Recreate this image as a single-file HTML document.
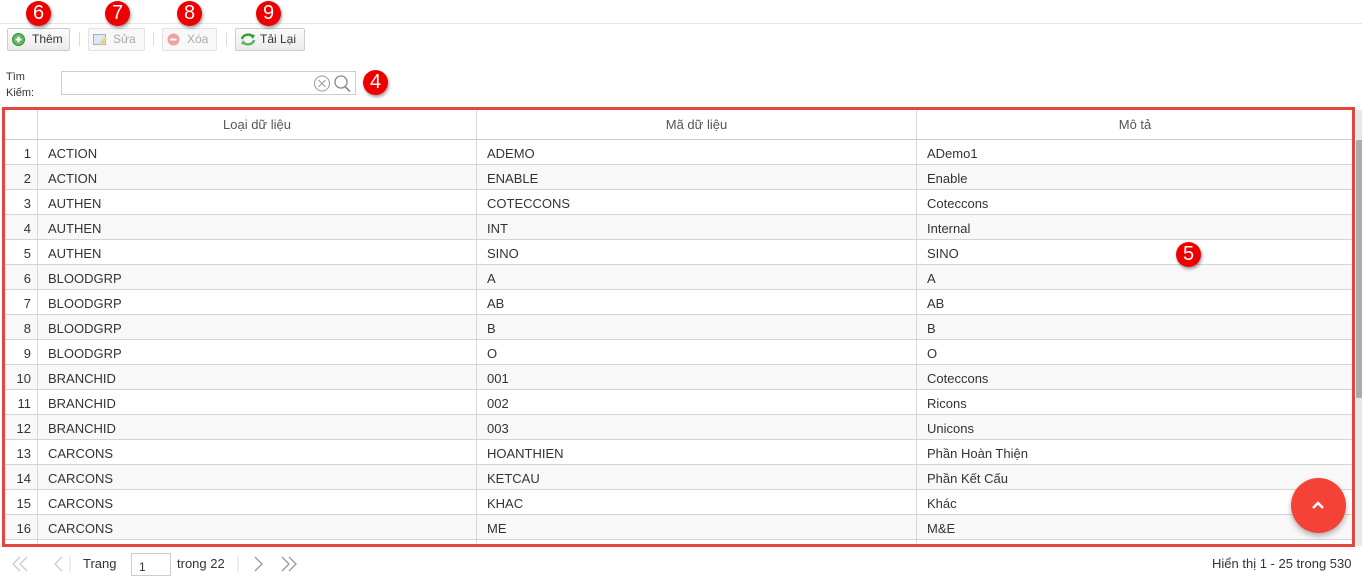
<!DOCTYPE html>
<html><head><meta charset="utf-8">
<style>
*{box-sizing:border-box;margin:0;padding:0}
body{width:1362px;height:581px;overflow:hidden;background:#fff;font-family:"Liberation Sans",Arial,sans-serif;font-size:13px;color:#333;position:relative}
.abs{position:absolute}
.badge{position:absolute;width:25px;height:25px;border-radius:50%;background:#e00;color:#fff;font-size:20px;text-align:center;line-height:25px;box-shadow:1px 2px 3px rgba(0,0,0,.4)}
.btn{position:absolute;top:28px;height:23px;border:1px solid #ccc;border-radius:2px;background:linear-gradient(#fafafa,#ececec);font-size:12px;line-height:21px;color:#333;padding-left:24px}
.btn.dis{color:#aaa;border-color:#e2e2e2;background:#f8f8f8}
.sep{position:absolute;top:32px;width:1px;height:14px;background:#ddd}
.grid{position:absolute;left:2px;top:107px;width:1353px;height:440px;border:3px solid #e4453f;overflow:hidden}
.row{position:absolute;left:0;width:1348px;height:25px;border-bottom:1px solid #d4d4d4;line-height:27px}
.row.alt{background:#f8f8f8}
.c{position:absolute;top:0;height:100%;border-right:1px solid #d8d8d8;white-space:nowrap}
.n{left:0;width:33px;text-align:right;padding-right:6px}
.c1{left:33px;width:439px;padding-left:10px}
.c2{left:472px;width:440px;padding-left:10px}
.c3{left:912px;width:436px;padding-left:10px;border-right:none}
.hdr .c{text-align:center;color:#555;padding:0}
.pg{position:absolute;top:556px;font-size:13px;color:#333}
</style></head><body>
<div class="abs" style="left:0;top:23px;width:1362px;height:1px;background:#e6e6e6"></div>

<div class="btn" style="left:7px;width:63px">
<svg class="abs" style="left:4px;top:4px" width="13" height="13"><circle cx="6.5" cy="6.5" r="6" fill="#5cb85c" stroke="#3d8b3d"/><path d="M6.5 3.5v6M3.5 6.5h6" stroke="#fff" stroke-width="2"/></svg>Thêm</div>
<div class="sep" style="left:79px"></div>
<div class="btn dis" style="left:88px;width:57px">
<svg class="abs" style="left:4px;top:4px" width="15" height="13"><rect x="0.5" y="1.5" width="12" height="10" fill="#dde8f5" stroke="#aac"/><path d="M6 11l6-7 2 2-6 7z" fill="#f0d080"/></svg>Sửa</div>
<div class="sep" style="left:153px"></div>
<div class="btn dis" style="left:162px;width:55px">
<svg class="abs" style="left:4px;top:4px" width="13" height="13"><circle cx="6.5" cy="6.5" r="6" fill="#f0a0a0"/><path d="M3.5 6.5h6" stroke="#fff" stroke-width="2"/></svg>Xóa</div>
<div class="sep" style="left:226px"></div>
<div class="btn" style="left:235px;width:70px">
<svg class="abs" style="left:4px;top:3px" width="16" height="15"><path d="M2 7a6 5 0 0 1 11-2" stroke="#3a9a3a" stroke-width="2.5" fill="none"/><path d="M14 8a6 5 0 0 1-11 2" stroke="#5cb85c" stroke-width="2.5" fill="none"/><path d="M10 2l5 1-2 4z" fill="#3a9a3a"/><path d="M6 13l-5-1 2-4z" fill="#5cb85c"/></svg>Tải Lại</div>

<div class="badge" style="left:26px;top:1px">6</div>
<div class="badge" style="left:105px;top:1px">7</div>
<div class="badge" style="left:177px;top:1px">8</div>
<div class="badge" style="left:256px;top:1px">9</div>

<div class="abs" style="left:6px;top:69px;font-size:11px;line-height:16px;color:#333">Tìm<br>Kiếm:</div>
<div class="abs" style="left:61px;top:71px;width:295px;height:24px;border:1px solid #ccc"></div>
<svg class="abs" style="left:313px;top:74px" width="42" height="19"><circle cx="9" cy="9.5" r="7.5" fill="none" stroke="#999"/><path d="M5.5 6l7 7M12.5 6l-7 7" stroke="#999"/><circle cx="28" cy="8" r="6" fill="none" stroke="#888" stroke-width="1.3"/><path d="M32 12.5l5 5" stroke="#888" stroke-width="1.6"/></svg>
<div class="badge" style="left:363px;top:70px">4</div>

<div class="grid">
<div class="row hdr" style="top:0;height:30px;line-height:29px;border-bottom:1px solid #ccc"><div class="c n"></div><div class="c c1">Loại dữ liệu</div><div class="c c2">Mã dữ liệu</div><div class="c c3">Mô tả</div></div>
<div class="row" style="top:30px"><div class="c n">1</div><div class="c c1">ACTION</div><div class="c c2">ADEMO</div><div class="c c3">ADemo1</div></div>
<div class="row alt" style="top:55px"><div class="c n">2</div><div class="c c1">ACTION</div><div class="c c2">ENABLE</div><div class="c c3">Enable</div></div>
<div class="row" style="top:80px"><div class="c n">3</div><div class="c c1">AUTHEN</div><div class="c c2">COTECCONS</div><div class="c c3">Coteccons</div></div>
<div class="row alt" style="top:105px"><div class="c n">4</div><div class="c c1">AUTHEN</div><div class="c c2">INT</div><div class="c c3">Internal</div></div>
<div class="row" style="top:130px"><div class="c n">5</div><div class="c c1">AUTHEN</div><div class="c c2">SINO</div><div class="c c3">SINO</div></div>
<div class="row alt" style="top:155px"><div class="c n">6</div><div class="c c1">BLOODGRP</div><div class="c c2">A</div><div class="c c3">A</div></div>
<div class="row" style="top:180px"><div class="c n">7</div><div class="c c1">BLOODGRP</div><div class="c c2">AB</div><div class="c c3">AB</div></div>
<div class="row alt" style="top:205px"><div class="c n">8</div><div class="c c1">BLOODGRP</div><div class="c c2">B</div><div class="c c3">B</div></div>
<div class="row" style="top:230px"><div class="c n">9</div><div class="c c1">BLOODGRP</div><div class="c c2">O</div><div class="c c3">O</div></div>
<div class="row alt" style="top:255px"><div class="c n">10</div><div class="c c1">BRANCHID</div><div class="c c2">001</div><div class="c c3">Coteccons</div></div>
<div class="row" style="top:280px"><div class="c n">11</div><div class="c c1">BRANCHID</div><div class="c c2">002</div><div class="c c3">Ricons</div></div>
<div class="row alt" style="top:305px"><div class="c n">12</div><div class="c c1">BRANCHID</div><div class="c c2">003</div><div class="c c3">Unicons</div></div>
<div class="row" style="top:330px"><div class="c n">13</div><div class="c c1">CARCONS</div><div class="c c2">HOANTHIEN</div><div class="c c3">Phần Hoàn Thiện</div></div>
<div class="row alt" style="top:355px"><div class="c n">14</div><div class="c c1">CARCONS</div><div class="c c2">KETCAU</div><div class="c c3">Phần Kết Cấu</div></div>
<div class="row" style="top:380px"><div class="c n">15</div><div class="c c1">CARCONS</div><div class="c c2">KHAC</div><div class="c c3">Khác</div></div>
<div class="row alt" style="top:405px"><div class="c n">16</div><div class="c c1">CARCONS</div><div class="c c2">ME</div><div class="c c3">M&amp;E</div></div>
<div class="row" style="top:430px"><div class="c n"></div><div class="c c1"></div><div class="c c2"></div><div class="c c3"></div></div>
</div>

<div class="abs" style="left:1356px;top:110px;width:6px;height:436px;background:#e8e8e8"></div>
<div class="abs" style="left:1356px;top:140px;width:6px;height:258px;background:#aaa;border-radius:2px 0 0 2px"></div>

<div class="badge" style="left:1176px;top:242px">5</div>

<div class="abs" style="left:1291px;top:478px;width:55px;height:55px;border-radius:50%;background:#f44336;box-shadow:0 3px 6px rgba(0,0,0,.3)"></div>
<svg class="abs" style="left:1310px;top:499px" width="16" height="12"><path d="M3 9l5-5 5 5" stroke="#fff" stroke-width="2.5" fill="none"/></svg>

<svg class="abs" style="left:8px;top:555px" width="300" height="18">
<path d="M12 2l-7 7 7 7M19 2l-7 7 7 7" stroke="#ccc" stroke-width="1.3" fill="none"/>
<path d="M54 2l-7 7 7 7" stroke="#ccc" stroke-width="1.3" fill="none"/>
<path d="M62 1v16" stroke="#ddd"/>
<path d="M230 1v16" stroke="#ddd"/>
<path d="M247 2l7 7-7 7" stroke="#999" stroke-width="1.3" fill="none"/>
<path d="M274 2l7 7-7 7M281 2l7 7-7 7" stroke="#999" stroke-width="1.3" fill="none"/>
<path d="M302 1v16" stroke="#ddd"/>
</svg>
<div class="pg" style="left:83px">Trang</div>
<div class="abs" style="left:131px;top:553px;width:40px;height:23px;border:1px solid #ccc;font-size:12px;padding:6px 0 0 7px">1</div>
<div class="pg" style="left:177px">trong 22</div>
<div class="pg" style="left:1212px">Hiển thị 1 - 25 trong 530</div>
</body></html>
